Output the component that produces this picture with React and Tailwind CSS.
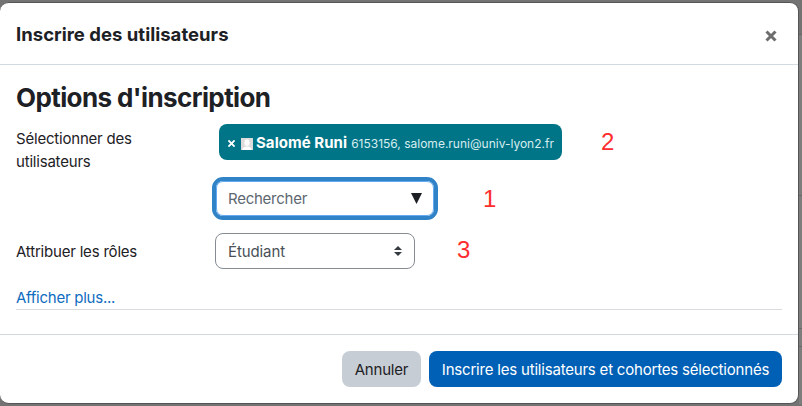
const ANNOT = "font-['Liberation_Sans',sans-serif] text-[24px] leading-6 tracking-normal text-[#ff2d2d]";

const Header = () =>
<header className="h-[62px] shrink-0 pl-4 pr-[21px] flex items-center justify-between border-b border-[#d3dbe2]">
    <h5 className="pt-[2px] text-[18.5px] leading-[27px] font-bold tracking-[0.02px]">Inscrire des utilisateurs</h5>
    <button aria-label="Fermer" className="mt-[4px] text-[#6d6d6d]">
      <svg width="12" height="12" viewBox="0 0 12 12" fill="none" stroke="currentColor" strokeWidth="3">
        <path d="M1.5 1.5l9 9M10.5 1.5l-9 9" />
      </svg>
    </button>
  </header>;


const Avatar = () =>
<svg className="ml-[6px] mt-[4px]" width="12" height="12" viewBox="0 0 12 12">
    <path fill="#dcdcdc" d="M0 0h12v12H0z" />
    <ellipse cx="6" cy="4.8" rx="2.6" ry="3.2" fill="#fff" />
    <path fill="#fff" d="M1.5 12c0-2.4 1.2-3.4 4.5-3.6 3.3.2 4.5 1.2 4.5 3.6z" />
  </svg>;


const SelectedUser = () =>
<div className="w-[343px] h-9 pl-[9px] flex items-center rounded-[8px] bg-[#007587] text-white whitespace-nowrap tracking-normal">
    <svg className="mt-[3px]" width="7" height="7" viewBox="0 0 7 7" fill="none" stroke="currentColor" strokeWidth="1.9">
      <path d="M.4.4l6.2 6.2M6.6.4L.4 6.6" />
    </svg>
    <Avatar />
    <span className="ml-[3px] text-[15px] font-bold tracking-[0.05px]">Salomé Runi</span>
    <span className="ml-1 pt-[2px] text-[12px] text-[#d8edf0]">6153156, salome.runi@univ-lyon2.fr</span>
  </div>;


const SearchBox = () =>
<div className="w-[226px] h-[43px] rounded-[11px] border-4 border-[#3183c8] flex">
    <div className="flex-1 pl-[11px] pr-[11px] flex items-center justify-between rounded-[7px] border border-[#65aaf0]">
      <span className="text-[15px] tracking-[-0.25px] text-[#5d6770]">Rechercher</span>
      <svg width="11" height="11" viewBox="0 0 11 11" fill="#1d2125"><path d="M0 0h11L5.5 11z" /></svg>
    </div>
  </div>;


const RoleSelect = () =>
<div className="w-[200px] h-9 pl-[12px] pr-[12px] flex items-center justify-between rounded-[8px] border border-[#858c94]">
    <span className="pt-[2px] text-[15px] tracking-[-0.1px] text-[#495057]">Étudiant</span>
    <svg width="8" height="10" viewBox="0 0 8 10" fill="#343a40"><path d="M0 4l4-4 4 4zM0 6h8l-4 4z" /></svg>
  </div>;


const Body = () =>
<main className="h-[270px] px-4 pt-[17px] border-b border-[#d3dbe2] tracking-[-0.2px]">
    <h3 className="text-[26px] leading-8 font-bold tracking-[-0.6px]">Options d'inscription</h3>
    <div className="mt-[10px] flex text-[15px] leading-[23px]">
      <div className="w-[196px] pt-[3px]">Sélectionner des<br />utilisateurs</div>
      <div>
        <div className="pl-[7px] flex items-center"><SelectedUser /><span className={`ml-[39px] ${ANNOT}`}>2</span></div>
        <div className="mt-[17px] flex items-center"><SearchBox /><span className={`ml-[45px] pt-px ${ANNOT}`}>1</span></div>
      </div>
    </div>
    <div className="mt-[13px] flex items-center text-[15px]">
      <div className="w-[199px] pt-[2px]">Attribuer les rôles</div>
      <RoleSelect />
      <span className={`ml-[42px] -mt-[3px] ${ANNOT}`}>3</span>
    </div>
    <div className="mt-[17px] h-[24px] border-b border-[#d9dcde] text-[15px] leading-[24px]">
      <a href="#" className="tracking-[-0.25px] text-[#0f6cbf]">Afficher plus...</a>
    </div>
  </main>;


const Footer = () =>
<footer className="pt-4 px-4 flex justify-end gap-2 text-[15px] tracking-[-0.2px] whitespace-nowrap">
    <button className="w-[79px] h-9 pt-[2px] rounded-[8px] bg-[#c7cdd4] text-[#1d2125]">Annuler</button>
    <button className="w-[353px] h-9 pt-[2px] rounded-[8px] bg-[#0060b6] text-white">Inscrire les utilisateurs et cohortes sélectionnés</button>
  </footer>;


export default function App() {
  return (
    <div className="w-[802px] h-[406px] pt-[2px] flex items-start overflow-hidden bg-[#737373] font-['Inter',sans-serif] text-[#1d2125]">
      <div className="w-[799px] h-[402px] shrink-0 rounded-[9px] border border-l-0 border-[#555] bg-white">
        <Header />
        <Body />
        <Footer />
      </div>
      {/* page edge behind the backdrop */}
      <div className="flex-1 h-[402px] bg-[#7d7d7d]">
        <div className="h-[33px] border-b border-[#686868] bg-[#737373]" />
        <div className="h-[161px] border-b border-[#686868]" />
        <div className="h-[133px] border-b border-[#686868]" />
        <div className="h-[18px] border-b border-[#686868]" />
      </div>
    </div>);

}
